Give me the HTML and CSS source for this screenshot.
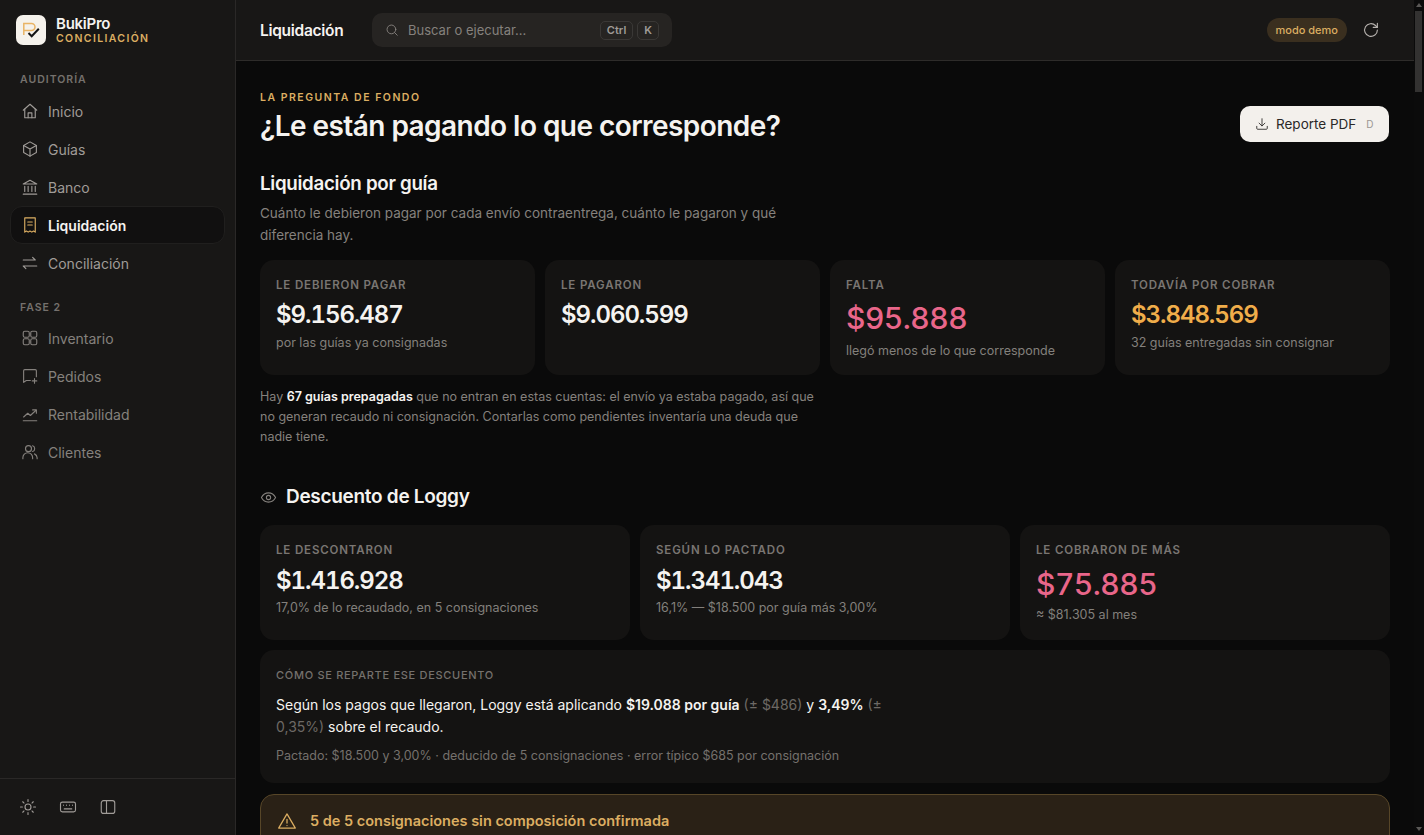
FILE: index.html
```html
<!DOCTYPE html>
<html lang="es">
<head>
<meta charset="utf-8">
<title>BukiPro Conciliación</title>
<link rel="stylesheet" href="styles.css">
</head>
<body>
<div class="app">
  <aside class="sidebar">
    <div class="brand">
      <div class="logo">
        <svg width="30" height="30" viewBox="0 0 30 30" fill="none"><path d="M7.800 20V8.500h7.700a3.500 3.500 0 0 1 0 7H7.800" stroke="#e9b465" stroke-width="1.500"/><path d="M12.500 18l3.200 3.200L22.800 13.800" stroke="#141414" stroke-width="2"/></svg>
      </div>
      <div class="brand-text">
        <div class="brand-name">BukiPro</div>
        <div class="brand-sub">CONCILIACIÓN</div>
      </div>
    </div>
    <nav class="nav">
      <div class="nav-label">AUDITORÍA</div>
      <a class="nav-item"><svg class="ico" viewBox="0 0 24 24"><path d="M3 11l9-8 9 8"/><path d="M5 9.500V21h14V9.500"/><path d="M9.500 21v-6.500h5V21"/></svg>Inicio</a>
      <a class="nav-item"><svg class="ico" viewBox="0 0 24 24"><path d="M12 2.500l8.500 4.800v9.400L12 21.500l-8.500-4.800V7.300z"/><path d="M3.500 7.300L12 12l8.500-4.700M12 12v9.500"/></svg>Guías</a>
      <a class="nav-item"><svg class="ico" viewBox="0 0 24 24"><path d="M12 3l9 5H3z"/><path d="M5 11v7M9.500 11v7M14.500 11v7M19 11v7M3 21.500h18"/></svg>Banco</a>
      <a class="nav-item active"><svg class="ico gold" viewBox="0 0 24 24"><path d="M5 2.500h14v19l-2.300-1.500-2.300 1.500-2.400-1.500-2.400 1.500L7.300 20 5 21.500z"/><path d="M9 8h6M9 12h6"/></svg>Liquidación</a>
      <a class="nav-item"><svg class="ico" viewBox="0 0 24 24"><path d="M3 8h16M15.500 4.500L19 8M3 16h18M3 16l3.500 3.500"/></svg>Conciliación</a>
      <div class="nav-label second">FASE 2</div>
      <a class="nav-item dim"><svg class="ico" viewBox="0 0 24 24"><rect x="3" y="3" width="8" height="8" rx="2"/><rect x="13" y="3" width="8" height="8" rx="2"/><rect x="3" y="13" width="8" height="8" rx="2"/><rect x="13" y="13" width="8" height="8" rx="2"/></svg>Inventario</a>
      <a class="nav-item dim"><svg class="ico" viewBox="0 0 24 24"><path d="M12.500 18H7l-3.500 2.500V5a1.500 1.500 0 0 1 1.500-1.500h14A1.500 1.500 0 0 1 20.500 5v8"/><path d="M18 15.500v6M15 18.500h6"/></svg>Pedidos</a>
      <a class="nav-item dim"><svg class="ico" viewBox="0 0 24 24"><path d="M3 21h18M3.500 16l5.500-5 3.500 3L20 7"/><path d="M15.500 6.500H20.500V11"/></svg>Rentabilidad</a>
      <a class="nav-item dim"><svg class="ico" viewBox="0 0 24 24"><circle cx="10" cy="7.500" r="4"/><path d="M2.500 21v-1.500a6.500 6.500 0 0 1 13 0V21"/><path d="M15.500 3.700a4 4 0 0 1 0 7.600M18 14.500a6 6 0 0 1 3.500 5.300V21"/></svg>Clientes</a>
    </nav>
    <div class="side-foot">
      <svg class="ico foot" viewBox="0 0 24 24"><circle cx="12" cy="12" r="4"/><path d="M12 2v2.500M12 19.500V22M2 12h2.500M19.500 12H22M5 5l1.700 1.700M17.300 17.300L19 19M5 19l1.700-1.700M17.300 6.700L19 5"/></svg>
      <svg class="ico foot" viewBox="0 0 24 24"><rect x="2" y="5.500" width="20" height="13" rx="2.500"/><path d="M6 9.500h.01M10 9.500h.01M14 9.500h.01M18 9.500h.01M7 14.500h10"/></svg>
      <svg class="ico foot" viewBox="0 0 24 24"><rect x="3" y="3.500" width="18" height="17" rx="3"/><path d="M10 3.500v17"/></svg>
    </div>
  </aside>
  <div class="right">
    <header class="topbar">
      <div class="top-title">Liquidación</div>
      <div class="search">
        <svg class="ico search-ico" viewBox="0 0 24 24"><circle cx="11" cy="11" r="7.500"/><path d="M16.500 16.500L21 21"/></svg>
        <span class="search-text">Buscar o ejecutar...</span>
        <kbd class="key">Ctrl</kbd><kbd class="key">K</kbd>
      </div>
      <div class="top-right">
        <span class="pill">modo demo</span>
        <svg class="ico refresh" viewBox="0 0 24 24"><path d="M20.500 12a8.500 8.500 0 1 1-2.500-6L20.500 8.500"/><path d="M20.500 3v5.500H15"/></svg>
      </div>
    </header>
    <main class="content">
      <div class="page-head">
        <div>
          <div class="eyebrow">LA PREGUNTA DE FONDO</div>
          <h1 class="page-title">¿Le están pagando lo que corresponde?</h1>
        </div>
        <button class="pdf-btn"><svg class="ico dl" viewBox="0 0 24 24"><path d="M12 3v12M7 10.500l5 5 5-5M3 16v3.500A1.500 1.500 0 0 0 4.500 21h15a1.500 1.500 0 0 0 1.500-1.500V16"/></svg><span class="btn-text">Reporte PDF</span><span class="btn-key">D</span></button>
      </div>

      <h2 class="section-title">Liquidación por guía</h2>
      <p class="section-desc">Cuánto le debieron pagar por cada envío contraentrega, cuánto le pagaron y qué diferencia hay.</p>

      <div class="grid four">
        <div class="card"><div class="card-label">LE DEBIERON PAGAR</div><div class="card-value">$9.156.487</div><div class="card-sub">por las guías ya consignadas</div></div>
        <div class="card"><div class="card-label">LE PAGARON</div><div class="card-value">$9.060.599</div></div>
        <div class="card"><div class="card-label">FALTA</div><div class="card-value big rose">$95.888</div><div class="card-sub tight">llegó menos de lo que corresponde</div></div>
        <div class="card"><div class="card-label">TODAVÍA POR COBRAR</div><div class="card-value amber">$3.848.569</div><div class="card-sub">32 guías entregadas sin consignar</div></div>
      </div>

      <p class="note">Hay <strong>67 guías prepagadas</strong> que no entran en estas cuentas: el envío ya estaba pagado, así que no generan recaudo ni consignación. Contarlas como pendientes inventaría una deuda que nadie tiene.</p>

      <h2 class="section-title with-icon"><svg class="ico eye" viewBox="0 0 24 24"><path d="M2 12s3.500-6.500 10-6.500S22 12 22 12s-3.500 6.500-10 6.500S2 12 2 12z"/><circle cx="12" cy="12" r="3"/></svg>Descuento de Loggy</h2>

      <div class="grid three">
        <div class="card short"><div class="card-label">LE DESCONTARON</div><div class="card-value">$1.416.928</div><div class="card-sub">17,0% de lo recaudado, en 5 consignaciones</div></div>
        <div class="card short"><div class="card-label">SEGÚN LO PACTADO</div><div class="card-value">$1.341.043</div><div class="card-sub">16,1% — $18.500 por guía más 3,00%</div></div>
        <div class="card short"><div class="card-label">LE COBRARON DE MÁS</div><div class="card-value big rose">$75.885</div><div class="card-sub tight">≈ $81.305 al mes</div></div>
      </div>

      <section class="split">
        <div class="split-label">CÓMO SE REPARTE ESE DESCUENTO</div>
        <p class="split-text">Según los pagos que llegaron, Loggy está aplicando <strong>$19.088 por guía</strong> <span class="faint">(± $486)</span> y <strong>3,49%</strong> <span class="faint">(± 0,35%)</span> sobre el recaudo.</p>
        <p class="split-foot">Pactado: $18.500 y 3,00% · deducido de 5 consignaciones · error típico $685 por consignación</p>
      </section>

      <section class="warn">
        <svg class="ico warn-ico" viewBox="0 0 24 24"><path d="M12 3.500L22 20.500H2z"/><path d="M12 10v4.500M12 17.500h.01"/></svg>
        <span class="warn-title">5 de 5 consignaciones sin composición confirmada</span>
      </section>
    </main>
  </div>
  <div class="scrollbar">
    <svg class="scroll-arrow" viewBox="0 0 10 10"><path d="M5 3l3 4H2z"/></svg>
    <div class="scroll-thumb"></div>
    <svg class="scroll-arrow bottom" viewBox="0 0 10 10"><path d="M5 7L2 3h6z"/></svg>
  </div>
</div>
</body>
</html>
```

FILE: styles.css
```css
* { box-sizing: border-box; }
html, body { margin: 0; height: 100%; overflow: hidden; }
body { background: #0a0a0a; color: #f5f3f0; font-family: Inter, "Liberation Sans", sans-serif; }
.app { display: flex; height: 835px; }
.ico { fill: none; stroke: currentColor; stroke-width: 1.500; stroke-linecap: round; stroke-linejoin: round; flex: none; }

.sidebar { width: 236px; flex: none; background: #181716; border-right: 1px solid #2a2827; display: flex; flex-direction: column; }
.brand { display: flex; align-items: center; gap: 10px; padding: 0 16px 1px; height: 61px; flex: none; }
.logo { width: 30px; height: 30px; border-radius: 7px; background: #f5f2ec; flex: none; }
.logo svg { display: block; }
.brand-text { display: flex; flex-direction: column; padding-bottom: 1px; }
.brand-name { font-size: 15px; font-weight: 600; line-height: 17px; color: #f5f3f0; letter-spacing: -0.25px; }
.brand-sub { font-size: 10.500px; font-weight: 600; line-height: 13px; color: #dcae62; letter-spacing: 1.350px; }
.nav { flex: 1; padding: 0 10px; }
.nav-label { font-size: 10.500px; font-weight: 600; letter-spacing: 1px; color: #75716d; line-height: 14px; padding: 12px 10px 5px; }
.nav-label.second { padding: 19px 10px 4px; }
.nav-item { display: flex; align-items: center; gap: 9px; height: 38px; padding: 0 10px; font-size: 14px; color: #a09c98; border: 1px solid transparent; border-radius: 12px; }
.nav-item .ico { width: 18px; height: 18px; }
.nav-item.dim { color: #85817d; }
.nav-item.active { color: #f5f3f0; font-weight: 600; background: #111010; border-color: #201f1e; }
.ico.gold { color: #dcae62; }
.side-foot { height: 57px; flex: none; border-top: 1px solid #2a2827; display: flex; align-items: center; gap: 22px; padding: 0 19px; color: #a09c98; }
.ico.foot { width: 18px; height: 18px; }

.right { flex: 1; min-width: 0; height: 835px; overflow: hidden; background: #0a0a0a; }
.scrollbar { width: 10px; flex: none; height: 835px; background: #0b0b0b; display: flex; flex-direction: column; }
.scroll-arrow { width: 10px; height: 10px; fill: #5a5856; flex: none; }
.scroll-arrow.bottom { margin-top: auto; margin-bottom: 1px; }
.scroll-thumb { width: 7px; height: 81px; margin: 1px 0 0 1px; background: #333231; }
.topbar { height: 61px; background: #181716; border-bottom: 1px solid #2e2c2a; display: flex; align-items: center; padding: 0 34px 0 24px; }
.top-title { font-size: 15.500px; font-weight: 600; letter-spacing: -0.3px; width: 112px; color: #f5f3f0; }
.search { width: 300px; height: 34px; background: #262422; border-radius: 10px; display: flex; align-items: center; padding: 0 13px; gap: 4px; }
.search-ico { width: 14px; height: 14px; color: #8a8682; margin-right: 5px; }
.search-text { flex: 1; font-size: 13px; color: #85817d; }
.key { font-family: Inter, "Liberation Sans", sans-serif; font-size: 11px; font-weight: 600; color: #a09c98; border: 1px solid #3a3836; border-radius: 5px; height: 19px; padding: 0 6px; display: flex; align-items: center; }
.top-right { margin-left: auto; display: flex; align-items: center; gap: 15px; }
.pill { font-size: 11px; font-weight: 500; color: #dcae62; background: #3a2f1f; border-radius: 12px; height: 24px; padding: 0 9px; display: flex; align-items: center; }
.refresh { width: 18px; height: 18px; color: #b5b1ad; }

.content { padding: 30px 24px 40px; }
.page-head { display: flex; justify-content: space-between; align-items: flex-end; }
.eyebrow { font-size: 10.500px; font-weight: 600; letter-spacing: 1.500px; line-height: 14px; color: #dcae62; }
.page-title { margin: 3px 0 0; font-size: 28px; font-weight: 600; line-height: 36px; letter-spacing: -0.55px; color: #f5f3f0; }
.pdf-btn { width: 149px; height: 36px; margin: 0 1px 2px 0; border: 0; border-radius: 10px; background: #f3f0ec; color: #2a2827; font-family: inherit; font-size: 13.500px; display: flex; align-items: center; padding: 0 15px; gap: 7px; white-space: nowrap; }
.btn-text { flex: none; }
.dl { width: 14px; height: 14px; }
.btn-key { margin-left: 3px; font-size: 10px; color: #9a9692; }

.section-title { margin: 28px 0 0; font-size: 18.750px; font-weight: 600; line-height: 24px; letter-spacing: -0.3px; color: #f5f3f0; }
.section-desc { margin: 6px 0 0; max-width: 560px; font-size: 13.500px; line-height: 22px; color: #85817d; }
.grid { display: grid; gap: 10px; }
.four { grid-template-columns: repeat(4, 1fr); margin-top: 14px; }
.three { grid-template-columns: repeat(3, 1fr); margin-top: 16px; }
.card { height: 115px; background: #141312; border-radius: 14px; padding: 17px 16px 0; }
.card-label { font-size: 11.500px; font-weight: 600; letter-spacing: .85px; line-height: 16px; color: #7a7672; }
.card-value { margin-top: 8px; font-size: 24px; font-weight: 600; line-height: 28px; letter-spacing: -1.050px; font-variant-numeric: tabular-nums; color: #f5f3f0; }
.card-value.big { font-size: 30px; line-height: 32px; font-weight: 500; letter-spacing: -0.5px; margin-top: 9px; }
.card-value.rose { color: #e9668a; }
.card-value.amber { color: #f0ad4a; }
.card-sub { margin-top: 5px; font-size: 12.500px; line-height: 18px; color: #83807c; }
.card-sub.tight { margin-top: 8px; }
.short .card-value { margin-top: 9px; }
.short .card-value.big { margin-top: 10px; }
.short .card-sub { margin-top: 4px; }
.short .card-sub.tight { margin-top: 6px; }
.note { margin: 12px 0 0; max-width: 560px; font-size: 12.500px; line-height: 20px; color: #85817d; }
.note strong { color: #f5f3f0; font-weight: 600; }
.with-icon { margin-top: 38px; display: flex; align-items: center; gap: 9px; font-size: 19px; }
.eye { width: 17px; height: 17px; color: #85817d; }

.split { margin-top: 10px; height: 133px; background: #141312; border-radius: 14px; padding: 17px 16px 0; }
.split-label { font-size: 11px; font-weight: 500; letter-spacing: .7px; line-height: 16px; color: #75716d; }
.split-text { margin: 11px 0 0; max-width: 624px; font-size: 14px; line-height: 22px; color: #f5f3f0; }
.split-text strong { font-weight: 600; }
.faint { color: #6d6965; }
.split-foot { margin: 9px 0 0; font-size: 12.500px; line-height: 18px; color: #75716d; }
.warn { margin-top: 11px; height: 70px; background: #2a2116; border: 1px solid #574628; border-radius: 14px; padding: 16px 16px 0; display: flex; align-items: flex-start; gap: 13px; }
.warn-ico { width: 20px; height: 20px; color: #dcae62; }
.warn-title { font-size: 14.500px; font-weight: 600; line-height: 20px; color: #dcae62; }
```
